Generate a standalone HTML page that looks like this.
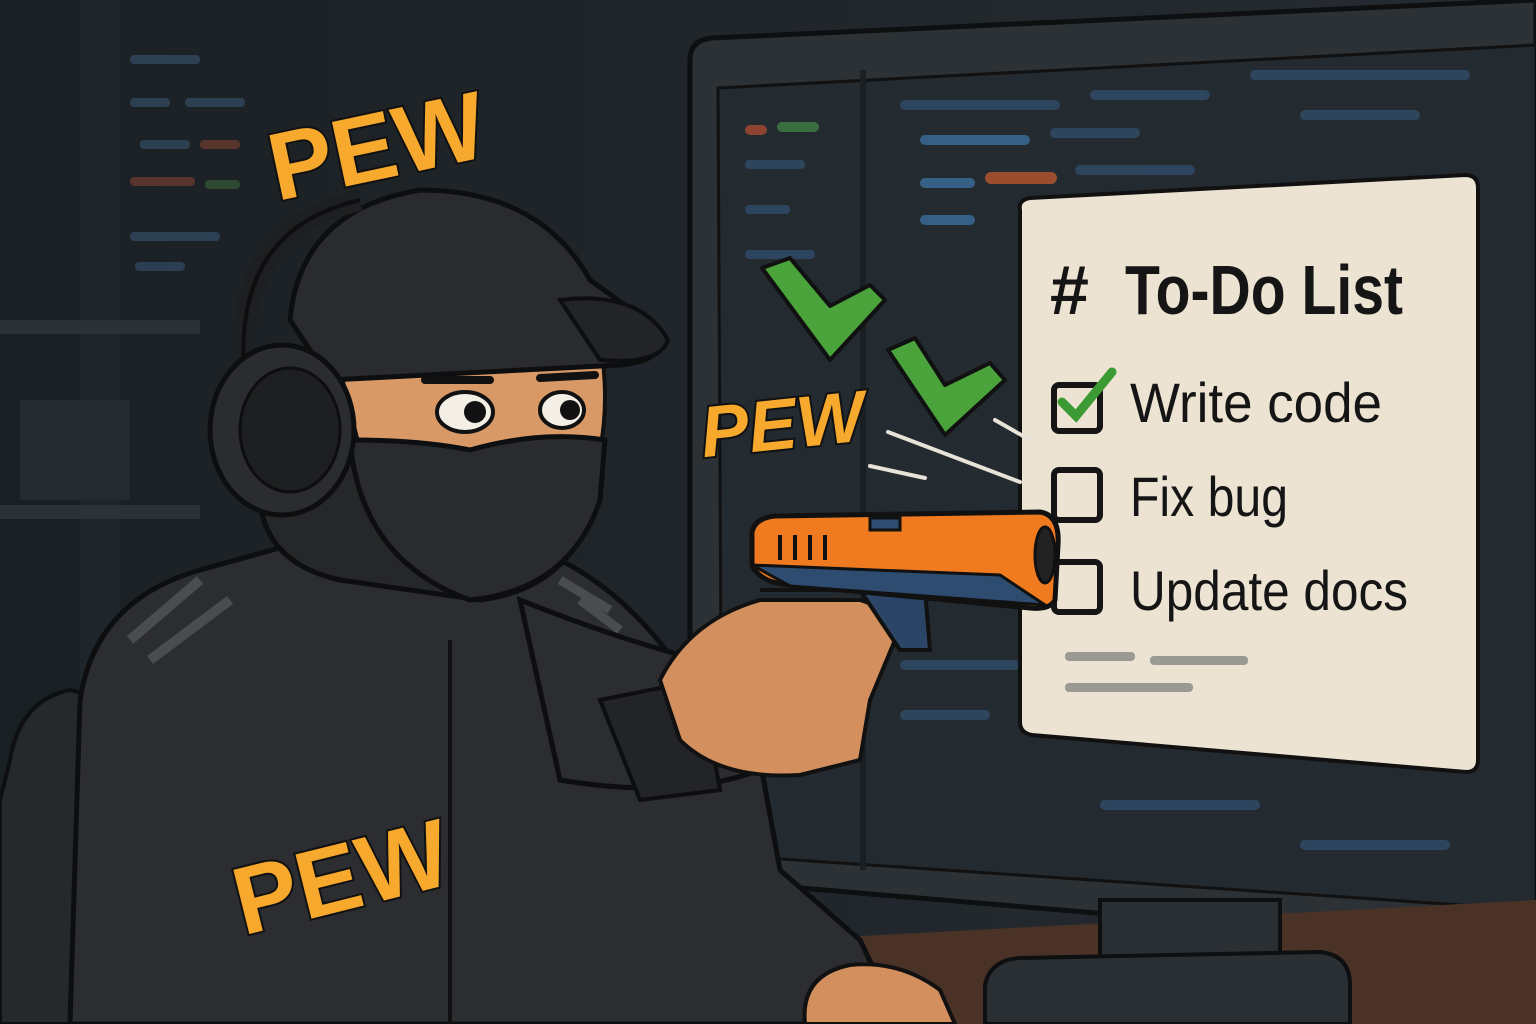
<!DOCTYPE html>
<html><head><meta charset="utf-8"><style>
html,body{margin:0;padding:0;width:1536px;height:1024px;overflow:hidden;background:#1d2327}
svg{display:block}
.pew{font-family:"Liberation Sans",sans-serif;font-weight:bold;fill:#f6a92c;stroke:#111;stroke-width:4;paint-order:stroke}
.todo{font-family:"Liberation Sans",sans-serif;fill:#151515}
</style></head><body>
<svg width="1536" height="1024" viewBox="0 0 1536 1024">
<defs>
<linearGradient id="bg" x1="0" y1="0" x2="1" y2="0">
<stop offset="0" stop-color="#1b2024"/><stop offset="1" stop-color="#252c31"/></linearGradient>
</defs>
<rect width="1536" height="1024" fill="url(#bg)"/>
<rect x="0" y="0" width="80" height="1024" fill="#192024"/>
<rect x="80" y="0" width="40" height="700" fill="#1f262b"/>
<rect x="0" y="320" width="200" height="14" fill="#2a3237"/>
<rect x="0" y="505" width="200" height="14" fill="#2a3237"/>
<rect x="20" y="400" width="110" height="100" fill="#232b30"/>
<g opacity="0.55">
<rect x="130" y="55" width="70" height="9" rx="4" fill="#3b5a78"/>
<rect x="130" y="98" width="40" height="9" rx="4" fill="#3b5a78"/>
<rect x="185" y="98" width="60" height="9" rx="4" fill="#3b5a78"/>
<rect x="140" y="140" width="50" height="9" rx="4" fill="#3b5a78"/>
<rect x="200" y="140" width="40" height="9" rx="4" fill="#8a4432"/>
<rect x="130" y="177" width="65" height="9" rx="4" fill="#8a4432"/>
<rect x="205" y="180" width="35" height="9" rx="4" fill="#3f6a3f"/>
<rect x="130" y="232" width="90" height="9" rx="4" fill="#3b5a78"/>
<rect x="135" y="262" width="50" height="9" rx="4" fill="#3b5a78"/>
</g>
<path d="M690 60 Q690 40 712 38 L1536 0 L1536 950 L705 880 Q690 878 690 862 Z" fill="#2b3135" stroke="#0d0f10" stroke-width="5"/>
<path d="M718 88 L1536 45 L1536 910 L722 855 Z" fill="#232a30" stroke="#111" stroke-width="3"/>
<rect x="860" y="70" width="6" height="800" fill="#1a1f23"/>
<g opacity="0.85">
<rect x="745" y="125" width="22" height="10" rx="5" fill="#a0482f"/>
<rect x="777" y="122" width="42" height="10" rx="5" fill="#3f7a45"/>
<rect x="745" y="160" width="60" height="9" rx="4" fill="#2f4a66"/>
<rect x="745" y="205" width="45" height="9" rx="4" fill="#2f4a66"/>
<rect x="745" y="250" width="70" height="9" rx="4" fill="#2f4a66"/>
<rect x="900" y="100" width="160" height="10" rx="5" fill="#2f4a66"/>
<rect x="1090" y="90" width="120" height="10" rx="5" fill="#2f4a66"/>
<rect x="920" y="135" width="110" height="10" rx="5" fill="#3a6a94"/>
<rect x="1050" y="128" width="90" height="10" rx="5" fill="#2f4a66"/>
<rect x="920" y="178" width="55" height="10" rx="5" fill="#3a6a94"/>
<rect x="985" y="172" width="72" height="12" rx="6" fill="#b0552e"/>
<rect x="1075" y="165" width="120" height="10" rx="5" fill="#2f4a66"/>
<rect x="920" y="215" width="55" height="10" rx="5" fill="#3a6a94"/>
<rect x="1250" y="70" width="220" height="10" rx="5" fill="#2f4a66"/>
<rect x="1300" y="110" width="120" height="10" rx="5" fill="#2f4a66"/>
<rect x="900" y="660" width="120" height="10" rx="5" fill="#2f4a66"/>
<rect x="900" y="710" width="90" height="10" rx="5" fill="#2f4a66"/>
<rect x="1100" y="800" width="160" height="10" rx="5" fill="#2f4a66"/>
<rect x="1300" y="840" width="150" height="10" rx="5" fill="#2f4a66"/>
</g>
<path d="M560 1024 L600 950 L1536 900 L1536 1024 Z" fill="#4a3226"/>
<rect x="1100" y="900" width="180" height="70" fill="#2a2f33" stroke="#0d0f10" stroke-width="4"/>
<path d="M985 985 Q990 960 1020 958 L1320 952 Q1350 955 1350 985 L1350 1024 L985 1024 Z" fill="#2a2f33" stroke="#0d0f10" stroke-width="4"/>
<path d="M1020 210 Q1018 200 1030 198 L1465 175 Q1478 175 1478 188 L1478 760 Q1478 772 1466 772 L1032 735 Q1020 733 1020 722 Z" fill="#ede3d2" stroke="#111" stroke-width="4"/>
<text x="1050" y="314" class="todo" font-size="70" font-weight="bold">#</text>
<text x="1125" y="314" class="todo" font-size="70" font-weight="bold" textLength="278" lengthAdjust="spacingAndGlyphs">To-Do List</text>
<text x="1130" y="422" class="todo" font-size="56" textLength="252" lengthAdjust="spacingAndGlyphs">Write code</text>
<text x="1130" y="516" class="todo" font-size="56" textLength="158" lengthAdjust="spacingAndGlyphs">Fix bug</text>
<text x="1130" y="610" class="todo" font-size="56" textLength="278" lengthAdjust="spacingAndGlyphs">Update docs</text>
<rect x="1054" y="385" width="46" height="46" rx="5" fill="none" stroke="#151515" stroke-width="6"/>
<rect x="1054" y="470" width="46" height="50" rx="5" fill="none" stroke="#151515" stroke-width="6"/>
<rect x="1054" y="562" width="46" height="50" rx="5" fill="none" stroke="#151515" stroke-width="6"/>
<path d="M1062 402 L1076 416 L1112 372" fill="none" stroke="#3c9a34" stroke-width="9" stroke-linecap="round"/>
<rect x="1065" y="652" width="70" height="9" rx="4" fill="#9a9a95"/>
<rect x="1150" y="656" width="98" height="9" rx="4" fill="#9a9a95"/>
<rect x="1065" y="683" width="128" height="9" rx="4" fill="#9a9a95"/>
<path d="M762 268 L790 258 L830 306 L870 285 L885 300 L830 360 Z" fill="#4aa43b" stroke="#111" stroke-width="4" stroke-linejoin="round"/>
<path d="M888 350 L915 338 L945 385 L990 363 L1005 380 L945 435 Z" fill="#4aa43b" stroke="#111" stroke-width="4" stroke-linejoin="round"/>
<g stroke="#e8e3d8" stroke-width="4" stroke-linecap="round">
<line x1="888" y1="432" x2="1020" y2="482"/>
<line x1="870" y1="466" x2="925" y2="478"/>
<line x1="995" y1="420" x2="1030" y2="440"/>
</g>
<path d="M10 760 Q20 700 70 690 L110 700 L120 1024 L0 1024 L0 800 Z" fill="#26292c" stroke="#0d0f10" stroke-width="4"/>
<path d="M70 1024 L80 700 Q95 600 200 570 L290 545 L440 520 L560 560 Q640 600 700 700 L760 760 L780 870 L860 940 L900 1024 Z" fill="#2c2d30" stroke="#0d0e0f" stroke-width="5"/>
<path d="M200 580 L130 640 M230 600 L150 660" stroke="#4a4c50" stroke-width="10" fill="none"/>
<path d="M560 580 L610 610 M580 600 L620 630" stroke="#4a4c50" stroke-width="9" fill="none"/>
<path d="M450 640 L450 1024" stroke="#111" stroke-width="4"/>
<path d="M520 600 Q620 640 700 660 L780 660 L760 770 Q680 800 560 780 Z" fill="#2c2d30" stroke="#0d0e0f" stroke-width="5"/>
<path d="M600 700 L700 680 L720 790 L640 800 Z" fill="#232427" stroke="#0d0e0f" stroke-width="4"/>
<path d="M805 1024 Q800 975 850 965 Q900 960 940 990 L955 1024 Z" fill="#d3905e" stroke="#111" stroke-width="4"/>
<path d="M260 470 Q250 560 340 580 L480 600 Q560 590 590 520 L590 440 L360 420 Z" fill="#262729" stroke="#0d0e0f" stroke-width="5"/>
<path d="M340 370 L600 340 Q610 400 600 450 L360 450 Z" fill="#d99966" stroke="#111" stroke-width="4"/>
<path d="M350 440 Q360 560 470 600 Q570 590 600 500 L605 440 Q540 430 470 450 Q420 440 350 440 Z" fill="#2a2b2e" stroke="#0d0e0f" stroke-width="5"/>
<ellipse cx="465" cy="412" rx="28" ry="20" fill="#f3efe6" stroke="#111" stroke-width="4"/>
<circle cx="475" cy="412" r="11" fill="#111"/>
<ellipse cx="562" cy="410" rx="22" ry="18" fill="#f3efe6" stroke="#111" stroke-width="4"/>
<circle cx="570" cy="410" r="10" fill="#111"/>
<path d="M425 380 L490 380 M540 378 L595 375" stroke="#111" stroke-width="8" stroke-linecap="round"/>
<path d="M290 320 Q300 210 420 190 Q540 190 590 280 L660 330 Q670 360 620 365 L330 380 Z" fill="#2a2b2e" stroke="#0d0e0f" stroke-width="5"/>
<path d="M560 300 Q640 290 668 340 Q660 365 600 360 Z" fill="#232427" stroke="#0d0e0f" stroke-width="4"/>
<path d="M245 380 Q230 230 360 200" fill="none" stroke="#1e1f21" stroke-width="22"/>
<path d="M245 380 Q230 230 360 200" fill="none" stroke="#0d0e0f" stroke-width="4"/>
<ellipse cx="282" cy="430" rx="72" ry="85" fill="#2b2c2f" stroke="#0d0e0f" stroke-width="5"/>
<ellipse cx="290" cy="430" rx="50" ry="62" fill="#1e1f21" stroke="#0d0e0f" stroke-width="3"/>
<path d="M660 680 Q690 620 760 600 L860 600 Q895 610 895 640 L870 700 L860 760 L800 775 Q720 780 680 740 Z" fill="#d3905e" stroke="#111" stroke-width="4"/>
<path d="M760 590 L860 590 L900 650 L930 650 L925 590 L780 590 Z" fill="#2b4566" stroke="#111" stroke-width="4"/>
<path d="M752 532 Q755 518 775 516 L1040 512 Q1060 515 1058 545 L1055 600 Q1050 610 1030 608 L790 585 Q760 583 752 565 Z" fill="#f07a1f" stroke="#111" stroke-width="5"/>
<path d="M752 565 L1000 575 L1045 605 L790 586 Z" fill="#2e4c70" stroke="#111" stroke-width="3"/>
<g stroke="#111" stroke-width="4"><line x1="780" y1="535" x2="780" y2="560"/><line x1="795" y1="535" x2="795" y2="560"/><line x1="810" y1="535" x2="810" y2="560"/><line x1="825" y1="535" x2="825" y2="560"/></g>
<rect x="870" y="518" width="30" height="12" fill="#2e4c70" stroke="#111" stroke-width="3"/>
<ellipse cx="1045" cy="555" rx="10" ry="28" fill="#222" stroke="#111" stroke-width="3"/>
<text class="pew" x="262" y="180" font-size="96" transform="rotate(-12 370 120)">PEW</text>
<text class="pew" x="700" y="448" font-size="72" font-style="italic" transform="rotate(-6 790 420)">PEW</text>
<text class="pew" x="225" y="912" font-size="96" transform="rotate(-14 330 850)">PEW</text>
</svg>
</body></html>
